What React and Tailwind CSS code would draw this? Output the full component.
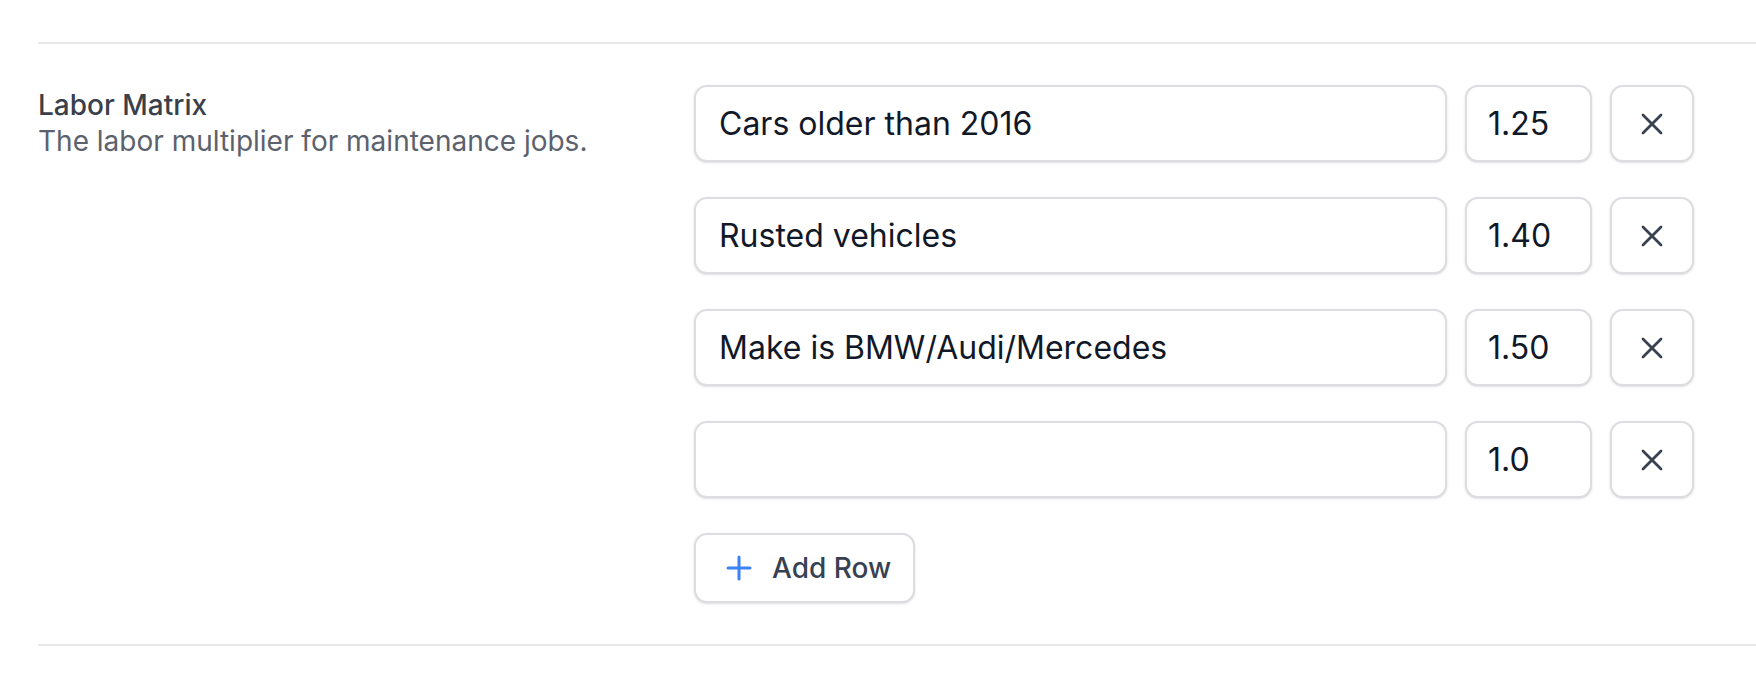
import React, { useState } from "react";

const rowsInit = [
  { id: 1, label: "Cars older than 2016", value: "1.25" },
  { id: 2, label: "Rusted vehicles", value: "1.40" },
  { id: 3, label: "Make is BMW/Audi/Mercedes", value: "1.50" },
  { id: 4, label: "", value: "1.0" },
];

function XIcon() {
  return (
    <svg width="22" height="22" viewBox="0 0 22 22" fill="none" stroke="currentColor" strokeWidth="2.8" strokeLinecap="round">
      <path d="M2 2l18 18M20 2L2 20" />
    </svg>
  );
}

function PlusIcon() {
  return (
    <svg width="26" height="26" viewBox="0 0 26 26" fill="none" stroke="currentColor" strokeWidth="3" strokeLinecap="round">
      <path d="M13 2v22M2 13h22" />
    </svg>
  );
}

export default function App() {
  const [rows, setRows] = useState(rowsInit);

  const update = (id, key, val) =>
    setRows(rows.map(r => (r.id === id ? { ...r, [key]: val } : r)));

  return (
    <div className="min-h-screen bg-white pt-[42px] pl-[38px]" style={{ fontFamily: "Inter, 'Liberation Sans', sans-serif" }}>
      <div className="border-t-2 border-b-2 border-[#e8e9ec] pt-[41px] pb-[41px] flex">
        {/* Label */}
        <div className="w-[656px] shrink-0 pt-[2px]">
          <h3 className="text-[28px] leading-[36px] font-medium text-[#3a3f4a]">Labor Matrix</h3>
          <p className="text-[28px] leading-[36px] text-[#5c626d]">The labor multiplier for maintenance jobs.</p>
        </div>

        {/* Matrix */}
        <div className="flex flex-col gap-[35px]">
          {rows.map(row => (
            <div key={row.id} className="flex gap-[18px] h-[77px]">
              <input
                value={row.label}
                onChange={e => update(row.id, "label", e.target.value)}
                className="w-[753px] h-full rounded-[13px] border-2 border-[#dcdde0] bg-white px-[23px] text-[32px] text-[#111827] shadow-sm outline-none"
              />
              <input
                value={row.value}
                onChange={e => update(row.id, "value", e.target.value)}
                className="w-[127px] h-full rounded-[13px] border-2 border-[#dcdde0] bg-white px-[21px] text-[32px] text-[#111827] shadow-sm outline-none"
              />
              <button
                onClick={() => setRows(rows.filter(r => r.id !== row.id))}
                className="w-[84px] h-full rounded-[13px] border-2 border-[#dcdde0] bg-white shadow-sm flex items-center justify-center text-[#374151]"
              >
                <XIcon />
              </button>
            </div>
          ))}

          <button
            onClick={() => setRows([...rows, { id: Date.now(), label: "", value: "1.0" }])}
            className="w-[221px] h-[70px] rounded-[13px] border-2 border-[#dcdde0] bg-white shadow-sm flex items-center gap-[20px] pl-[30px] text-[28px] font-medium text-[#374151]"
          >
            <span className="text-[#3b82f6]"><PlusIcon /></span>
            Add Row
          </button>
        </div>
      </div>
    </div>
  );
}
